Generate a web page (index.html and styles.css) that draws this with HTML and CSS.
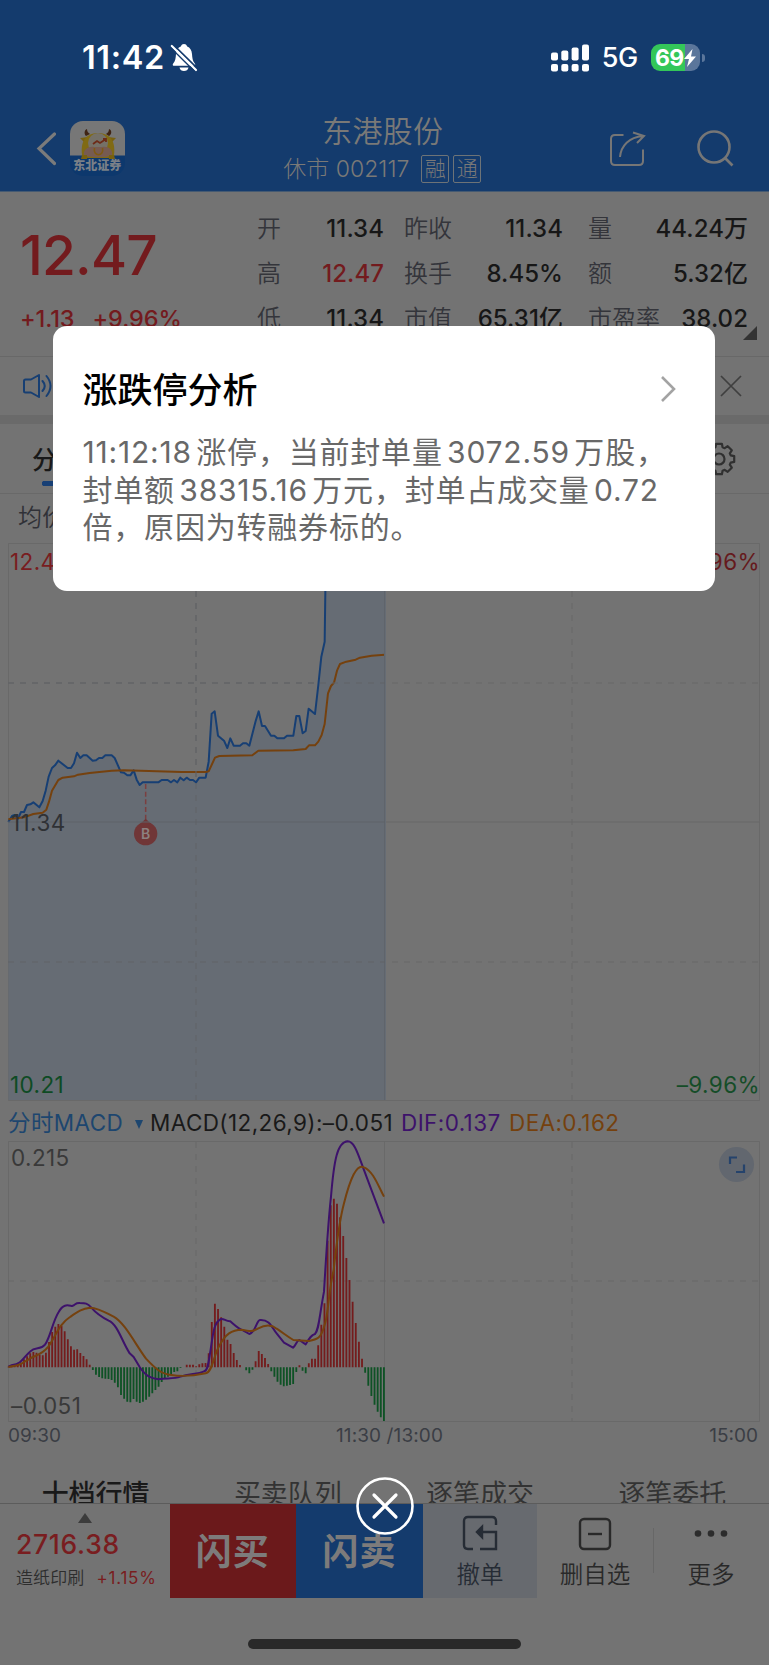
FILE: index.html
```html
<!DOCTYPE html>
<html lang="zh-CN">
<head>
<meta charset="utf-8">
<title>东港股份</title>
<link rel="stylesheet" href="styles.css">
</head>
<body>
<div class="screen">
  <header class="header">
    <div class="status">
      <div class="status-left">
        <span class="clock">11:42</span>
        <svg class="bell" width="28" height="30" viewBox="0 0 28 30">
          <path d="M3.500 22.800h20.500c1.200-.1 1.600-1.200.8-2.200C22.500 18 22.300 15 22 11c-.3-4-2-6.500-4.800-7.500C16.700 1.800 15.400 1 14 1s-2.700.8-3.200 2.500C8 4.500 6.300 7 6 11c-.3 4-.5 7-2.800 9.600-.8 1-.5 2.200.3 2.200zM9.500 24.500h9c-.4 2.400-2.200 3.600-4.500 3.600s-4.100-1.200-4.500-3.600z" fill="#fff"/>
          <path d="M3.200 1.600 27.400 25.300" stroke="#143b6d" stroke-width="1.700"/>
          <path d="M1.800 3 26 27" stroke="#fff" stroke-width="2.200" stroke-linecap="round"/>
          <path d="M.4 4.500 24.400 28.300" stroke="#143b6d" stroke-width="1.400"/>
        </svg>
      </div>
      <div class="status-right">
        <svg width="40" height="28" viewBox="0 0 40 28" fill="#fff">
          <rect x="1" y="8.500" width="7" height="8" rx="2"/><rect x="11.300" y="6.500" width="7" height="10" rx="2"/><rect x="21.600" y="3.500" width="7" height="13" rx="2"/><rect x="32" y=".5" width="7" height="16" rx="2"/>
          <rect x="1" y="20" width="7" height="7.500" rx="2"/><rect x="11.300" y="20" width="7" height="7.500" rx="2"/><rect x="21.600" y="20" width="7" height="7.500" rx="2"/><rect x="32" y="20" width="7" height="7.500" rx="2"/>
        </svg>
        <span class="net">5G</span>
        <div class="battery">
          <span>69</span>
          <svg width="12" height="18" viewBox="0 0 12 18"><path d="M8.500 0 0 10h5L3 18l9-10.500H7z" fill="#fff"/></svg>
        </div>
        <i class="nub"></i>
      </div>
    </div>
    <div class="nav">
      <svg class="back" width="20" height="34" viewBox="0 0 20 34"><path d="M18.500 2 3 16.500 18.500 31.500" fill="none" stroke="#7b7b7b" stroke-width="3.200" stroke-linecap="round"/></svg>
      <div class="logo">
        <svg width="55" height="40" viewBox="0 0 55 40">
          <path d="M17 8c-3 1-3 5-1 7l4-2c-2-1-3-3-3-5zM39 8c3 1 3 5 0 7l-3-2c2-1 3-3 3-5z" fill="#3f2413"/>
          <path d="M10 17l8-1-3 6zM46 17l-8-1 3 6z" fill="#776012"/>
          <path d="M12 34C10 18 18 12 28 12s18 6 16 22q-2 3-6 3H18q-4 0-6-3z" fill="#806a13"/>
          <circle cx="28" cy="22" r="10" fill="#757168"/>
          <path d="M14 34c-1-6 5-9 10-8h8c6-1 11 2 10 8-3 3-25 3-28 0z" fill="#775b51"/>
          <path d="M12 34h5v4h-6zM39 34h5l1 4h-6z" fill="#786010"/>
          <path d="M23 23l4-3 3 2 6-4M33 18h3v3" fill="none" stroke="#6d2b18" stroke-width="1.800"/>
          <path d="M24.500 27c-2 9 10 9 8 0" fill="none" stroke="#805a13" stroke-width="1.600"/>
        </svg>
        <b>东北证券</b>
      </div>
      <div class="titles">
        <div class="name">东港股份</div>
        <div class="code"><span>休市 002117</span><i>融</i><i>通</i></div>
      </div>
      <svg class="share" width="38" height="38" viewBox="0 0 38 38" fill="none" stroke="#767676" stroke-width="2">
        <path d="M14.500 4H6Q2 4 2 8v22q0 4 4 4h24q4 0 4-4V18.500"/><path d="M11 26C12 15 20 6 34 5M24 1.500 35 5l-7 7"/>
      </svg>
      <svg class="search" width="38" height="38" viewBox="0 0 38 38" fill="none" stroke="#767676" stroke-width="2.600"><circle cx="18" cy="17" r="15.500"/><path d="m28.500 27.500 8 8"/></svg>
    </div>
  </header>

  <section class="quote">
    <div class="last">
      <div class="price">12.47</div>
      <div class="change"><span>+1.13</span><span>+9.96%</span></div>
    </div>
    <div class="stats c1"><div><span>开</span><b>11.34</b></div><div><span>高</span><b class="up">12.47</b></div><div><span>低</span><b>11.34</b></div></div>
    <div class="stats c2"><div><span>昨收</span><b>11.34</b></div><div><span>换手</span><b>8.45%</b></div><div><span>市值</span><b>65.31亿</b></div></div>
    <div class="stats c3"><div><span>量</span><b>44.24万</b></div><div><span>额</span><b>5.32亿</b></div><div><span>市盈率</span><b>38.02</b></div></div>
    <svg class="corner" width="14" height="14" viewBox="0 0 14 14"><path d="M14 0v14H0z" fill="#333"/></svg>
  </section>

  <section class="notice">
    <svg width="30" height="26" viewBox="0 0 30 26" fill="none" stroke="#173f73" stroke-width="2" stroke-linejoin="round" stroke-linecap="round">
      <path d="M1 8v10q0 1.500 1.500 1.500H8l8 4.500V2L8 6.500H2.500Q1 6.500 1 8zM19.500 8q4.500 5 0 10M23.500 3q8 10 0 20"/>
    </svg>
    <svg width="22" height="22" viewBox="0 0 22 22" stroke="#3f3f3f" stroke-width="1.700"><path d="m1 1 20 20M21 1 1 21"/></svg>
  </section>

  <section class="tabs">
    <div class="tab">分时</div>
    <svg width="34" height="34" viewBox="-17 -17 34 34" fill="none" stroke="#303030" stroke-width="2.200" stroke-linejoin="round">
      <path id="gear" d=""/><circle r="5.500"/>
    </svg>
  </section>
  <div class="average">均价</div>

  <svg class="chart" width="769" height="564" viewBox="0 0 769 564">
    <g fill="none" stroke="#696969"><path d="M8.500 3.500h751v557h-751zM8.500 282h751"/><path d="M196 3v557M572 3v557M8 143h751M8 422h751" stroke-dasharray="6 6"/></g>
    <g transform="translate(0 40) scale(.33333)">
      <path class="area" d="M25 726 L36 708 44 705 54 716 63 696 72 696 81 675 91 673 100 667 118 682 128 663 137 632 146 590 156 564 165 556 175 542 203 564 213 564 222 550 231 518 241 534 250 526 260 526 278 542 288 541 297 534 307 534 316 526 335 526 344 534 363 577 372 578 382 586 391 586 401 571 410 599 419 615 428 607 475 607 485 600 503 600 513 607 522 600 532 607 541 593 551 601 560 593 570 600 579 600 588 607 598 593 617 593 626 545 635 401 644 394 654 467 672 482 682 504 691 475 701 497 720 497 729 490 739 490 748 497 767 423 776 394 786 438 795 438 813 467 823 467 832 475 852 475 861 467 880 467 889 408 898 408 908 460 917 453 926 386 945 402 955 315 964 230 974 185 978 -109H1158V1560H25Z"/>
      <path class="blue" d="M25 726 L36 708 44 705 54 716 63 696 72 696 81 675 91 673 100 667 118 682 128 663 137 632 146 590 156 564 165 556 175 542 203 564 213 564 222 550 231 518 241 534 250 526 260 526 278 542 288 541 297 534 307 534 316 526 335 526 344 534 363 577 372 578 382 586 391 586 401 571 410 599 419 615 428 607 475 607 485 600 503 600 513 607 522 600 532 607 541 593 551 601 560 593 570 600 579 600 588 607 598 593 617 593 626 545 635 401 644 394 654 467 672 482 682 504 691 475 701 497 720 497 729 490 739 490 748 497 767 423 776 394 786 438 795 438 813 467 823 467 832 475 852 475 861 467 880 467 889 408 898 408 908 460 917 453 926 386 945 402 955 315 964 230 974 185 978 -109"/>
      <path class="orange" d="M25 718 72 712 100 702 128 698 139 689 147 665 156 632 175 600 188 593 222 589 234 584 269 579 335 572 372 571 545 576H617L626 574 645 533 658 528 757 526 775 512 880 511 917 507 927 496H945L955 485 965 465 974 432 984 340 993 318 1002 308 1011 272 1020 252 1039 245 1067 239 1080 233 1115 227 1154 224"/>
      <path d="M437 612V724" stroke="#7b3f40" stroke-width="4.500" stroke-dasharray="15 8"/>
      <path d="M437 716 460 738H414z" fill="#703637"/><circle cx="437" cy="761" r="35" fill="#703637"/>
    </g>
    <path d="M384.500 3v557" stroke="#5f646b"/><path d="M196 3v557M8 143h377M8 422h377" stroke="#616367" stroke-dasharray="6 6"/><path d="M8 282h377" stroke="#5f6268"/>
    <text x="145.700" y="299" class="badge">B</text>
    <text x="10" y="29.500" class="lab" fill="#791d20">12.47</text>
    <text x="760" y="29.500" class="lab end" fill="#651a1d">9.96%</text>
    <text x="11" y="291" class="lab" fill="#2f3135">11.34</text>
    <text x="10" y="553" class="lab" fill="#0e4b24">10.21</text>
    <text x="760" y="553" class="lab end" fill="#154d28">–9.96%</text>
  </svg>

  <div class="legend"><span class="sel">分时MACD</span><i></i><span class="l1">MACD(12,26,9):–0.051</span><span class="l2">DIF:0.137</span><span class="l3">DEA:0.162</span></div>

  <svg class="chart" width="769" height="288" viewBox="0 0 769 288">
    <g fill="none" stroke="#696969"><path d="M8.500 3.500h751v280h-751zM384.500 3.500v280"/><path d="M196 4v279M572 4v279M8 143h751" stroke-dasharray="6 6"/></g>
    <g transform="translate(0 -68) scale(.33333)">
      <path id="up" stroke="#741c1d" stroke-width="5.500"/>
      <path id="down" stroke="#0e5225" stroke-width="5.500"/>
      <path class="purple" d="M25 890 37 885C64 884 73 859 90 845 107 828 120 842 135 824 151 802 158 754 176 726 190 700 204 706 216 708 229 703 225 698 240 699 256 699 262 699 274 713 293 735 310 744 326 752 353 763 366 815 389 850L401 861 419 891C438 920 454 925 475 928 499 923 519 928 541 920 570 910 593 914 612 904 624 904 626 874 632 838 641 775 644 757 663 747 672 745 678 755 691 754 705 766 713 775 729 781L748 792C768 787 769 751 780 750 810 748 815 772 831 792L852 818 879 833C889 825 889 812 898 810L917 823C928 805 933 795 945 792 957 779 957 745 972 665 976 600 983 470 993 380 1002 270 1012 216 1043 214 1062 214 1072 246 1089 292L1152 460"/>
      <path class="orange2" d="M25 891C70 884 65 879 91 865 109 855 126 854 145 830 167 799 177 762 210 741 230 727 246 715 270 713 300 715 320 730 341 740 374 758 405 821 438 866 466 896 484 912 514 915 545 920 583 917 617 910 637 907 642 855 655 833 676 791 696 779 725 779 753 785 757 785 775 775 800 762 816 765 830 776 851 790 863 800 880 810L926 813C950 808 962 808 973 768 986 733 984 670 1001 600 1009 527 1016 460 1032 400 1051 325 1070 281 1092 292 1118 303 1132 341 1152 380"/>
    </g>
    <circle cx="736.500" cy="26.500" r="17.500" fill="#62676f"/>
    <path d="M730 26v-6.500h7M744 26.500V34h-8" fill="none" stroke="#25436c" stroke-width="2.200"/>
    <text x="11" y="28" class="lab" fill="#393939">0.215</text>
    <text x="11" y="275.500" class="lab" fill="#393939">–0.051</text>
  </svg>
  <div class="axis"><span>09:30</span><span class="mid">11:30 /13:00</span><span>15:00</span></div>

  <div class="depth"><span class="on">十档行情</span><span>买卖队列</span><span>逐笔成交</span><span>逐笔委托</span></div>

  <footer class="bar">
    <div class="index"><i></i><b>2716.38</b><div><span>造纸印刷</span><em>+1.15%</em></div></div>
    <div class="trade buy">闪买</div>
    <div class="trade sell">闪卖</div>
    <div class="act cancel">
      <svg width="36" height="36" viewBox="0 0 36 36" fill="none" stroke="#262c35" stroke-width="2.400"><path d="M34 10V6q0-4-4-4H6Q2 2 2 6v24q0 4 4 4h5M18 34h16V17H20"/><path d="M20 12v10l-5-5z" fill="#262c35"/></svg>
      <span>撤单</span>
    </div>
    <div class="act"><svg width="36" height="36" viewBox="0 0 36 36" fill="none" stroke="#292929" stroke-width="2.400"><rect x="3" y="4" width="30" height="30" rx="4"/><path d="M11 19h14"/></svg><span>删自选</span></div>
    <div class="act more"><svg width="36" height="36" viewBox="0 0 36 36" fill="#2c2c2c"><circle cx="5" cy="18.500" r="3.300"/><circle cx="18" cy="18.500" r="3.300"/><circle cx="31" cy="18.500" r="3.300"/></svg><span>更多</span></div>
  </footer>
  <div class="home"><i></i></div>

  <div class="dialog">
    <div class="dialog-head"><h2>涨跌停分析</h2><svg width="17" height="28" viewBox="0 0 17 28"><path d="m2 2 12 12L2 26" fill="none" stroke="#a3a3a3" stroke-width="2.600"/></svg></div>
    <p>11:12:18 涨停，当前封单量 3072.59 万股，<br>封单额 38315.16 万元，封单占成交量 0.72<br>倍，原因为转融券标的。</p>
  </div>
  <svg class="close" width="60" height="60" viewBox="0 0 60 60" fill="none" stroke="#fff"><circle cx="30" cy="30" r="27.500" stroke-width="2.600"/><path d="M19 19l22 22M41 19 19 41" stroke-width="3.200" stroke-linecap="round"/></svg>
</div>
<script src="chart.js"></script>
</body>
</html>
```
FILE: chart.js
```js
// MACD histogram, one value per minute from 09:30 to 11:30
const bars = [2,4,8,10,14,24,33,42,46,44,38,36,44,76,106,122,130,124,108,84,63,53,54,43,34,24,8,-8,-22,-29,-33,-34,-35,-38,-46,-60,-83,-94,-103,-105,-95,-103,-107,-103,-97,-88,-78,-68,-58,-44,-34,-28,-20,-14,-12,-2,0,8,8,8,3,9,12,13,42,136,191,175,150,122,83,70,43,22,7,0,-9,-18,-7,18,49,40,28,10,-12,-28,-43,-52,-57,-55,-53,-50,-14,6,-10,-18,12,26,26,66,128,192,380,486,506,491,450,394,328,262,197,133,77,26,-16,-55,-86,-112,-133,-150,-161];
const draw = (id, keep) => document.getElementById(id).setAttribute('d',
  bars.map((v, i) => keep(v) ? `M${(25 + 9.39 * i).toFixed(1)} 892v${-v}` : '').join(''));
draw('up', v => v > 0);
draw('down', v => v < 0);

// gear outline: eight teeth
let d = '';
for (let i = 0; i < 8; i++) {
  [[-0.3, 12.2], [-0.19, 15.5], [0.19, 15.5], [0.3, 12.2]].forEach(([off, r]) => {
    const a = i * Math.PI / 4 + off;
    d += (d ? 'L' : 'M') + (r * Math.cos(a)).toFixed(1) + ' ' + (r * Math.sin(a)).toFixed(1);
  });
}
document.getElementById('gear').setAttribute('d', d + 'Z');
```
FILE: styles.css
```css
* { box-sizing: border-box; }
body { margin: 0; background: #737373; font-family: Inter, "Noto Sans CJK SC", sans-serif; color: #191919; }
i, em { font-style: normal; }
svg { display: block; flex: none; }
.screen { position: relative; width: 769px; height: 1665px; overflow: hidden; white-space: nowrap; }
.header { height: 192px; background: #143b6d; border-bottom: 1px solid #455a72; }
.status { height: 100px; padding: 15px 64px 0 82px; display: flex; justify-content: space-between; align-items: center; color: #fff; }
.status-left, .status-right { display: flex; align-items: center; }
.clock { font-size: 32.500px; font-weight: 600; letter-spacing: .6px; }
.bell { margin-left: 5px; }
.net { font-size: 27px; margin: 0 13px 0 12px; letter-spacing: -.3px; font-weight: 450; }
.battery { width: 49px; height: 27px; border-radius: 9px; background: linear-gradient(90deg, #34c759 0 34px, #5b769b 34px); display: flex; align-items: center; padding-left: 4px; font-size: 23px; font-weight: 700; letter-spacing: -.6px; }
.nub { width: 3px; height: 8px; border-radius: 0 3px 3px 0; background: #5b769b; margin-left: 2px; }
.nav { height: 91px; padding: 0 35px 0 36px; display: flex; align-items: flex-start; }
.back { margin-top: 32px; }
.logo { width: 55px; height: 55px; margin: 21px 0 0 14px; border-radius: 13px; overflow: hidden; background: linear-gradient(#777 0 34px, #0d386d 35px); }
.logo svg { margin-bottom: -3px; }
.logo b { display: block; font-size: 12px; line-height: 15px; text-align: center; color: #7a8087; font-weight: 900; }
.titles { width: 260px; margin: 12px 0 0 129px; text-align: center; color: #7a7977; }
.name { font-size: 30px; line-height: 38px; font-weight: 350; letter-spacing: .3px; }
.code { margin-top: 5px; display: flex; align-items: center; justify-content: center; font-size: 23px; line-height: 28px; font-weight: 300; }
.code span { margin-right: 12px; letter-spacing: 0; }
.code i { width: 28px; height: 28px; line-height: 25px; border: 1px solid #6d7377; border-radius: 2px; margin-right: 4px; font-size: 21px; }
.code i:last-child { margin-right: 1px; }
.share { margin: 31px 0 0 97px; }
.search { margin: 30px 0 0 49px; }
.quote { position: relative; height: 165px; padding: 14px 21px 0 20px; display: flex; border-bottom: 1px solid #686868; }
.last { width: 237px; color: #731b1e; }
.price { font-size: 55px; line-height: 66px; margin-top: 16px; font-weight: 500; letter-spacing: -.8px; }
.change { display: flex; gap: 18px; font-size: 23.500px; line-height: 28px; margin-top: 17px; font-weight: 450; letter-spacing: -.1px; }
.stats { line-height: 45px; font-size: 24px; }
.stats div { display: flex; justify-content: space-between; height: 45px; }
.stats span { color: #34353b; font-weight: 350; }
.stats b { font-weight: 500; color: #171717; letter-spacing: .05px; }
.stats .up { color: #731b1e; }
.c1 { width: 127px; } .c2 { width: 159px; margin-left: 20px; } .c3 { width: 160px; margin-left: 25px; }
.corner { position: absolute; left: 743px; top: 134px; }
.notice { height: 67px; padding: 0 27px 0 23px; border-bottom: 9px solid #6a6a6a; display: flex; justify-content: space-between; align-items: center; }
.tabs { height: 70px; padding: 0 33px 0 32px; border-bottom: 1px solid #696969; display: flex; justify-content: space-between; align-items: center; }
.tab { width: 48px; height: 62px; padding-top: 13px; line-height: 39px; font-size: 25px; font-weight: 500; background: radial-gradient(circle at 2.500px 2.500px, #173f75 2.500px, transparent 3px) 9.500px 53px / 5px 5px no-repeat, linear-gradient(#173f75, #173f75) 12px 53px / 26px 5px no-repeat; }
.average { height: 46px; padding-left: 18px; font-size: 24px; line-height: 47px; font-weight: 350; color: #303137; }
.lab { font-size: 22.500px; letter-spacing: .4px; }
.end { text-anchor: end; }
.badge { font-size: 14px; font-weight: 600; fill: #8c8080; text-anchor: middle; }
.area { fill: #666c74; }
.blue, .orange, .purple, .orange2 { fill: none; stroke-width: 6; stroke-linejoin: round; }
.blue { stroke: #173f74; }
.orange, .orange2 { stroke: #75410e; }
.purple { stroke: #3d126b; }
.legend { height: 34px; padding: 4px 0 0 8px; display: flex; align-items: center; line-height: 30px; font-size: 22.500px; letter-spacing: .4px; }
.sel { color: #1d466f; width: 118px; }
.legend i { border: 4.500px solid transparent; border-top: 9px solid #1d466f; border-bottom: 0; margin: 3px 7px 0 9px; }
.l1 { width: 251px; } .l2 { width: 108px; color: #3d126b; } .l3 { color: #75410e; }
.axis { height: 24px; padding: 0 11px 0 8px; display: grid; grid-template-columns: 1fr auto 1fr; font-size: 19px; line-height: 20px; color: #3b3e45; }
.axis span:last-child { text-align: right; }
.mid { padding-left: 13px; letter-spacing: .1px; }
.depth { height: 54px; padding-top: 23px; display: grid; grid-template-columns: repeat(4, 1fr); text-align: center; font-size: 27px; line-height: 44px; overflow: hidden; color: #333; border-bottom: 1px solid #5c5c5c; font-weight: 400; }
.depth .on { color: #191919; font-weight: 500; }
.depth span { margin-right: 1px; }
.bar { height: 94px; display: grid; grid-template: 94px / 169.500px 126.500px 127px 114px 116px 116px; }
.index { padding: 9px 0 0 16px; color: #791d20; }
.index i { display: block; width: 14px; border: 7px solid transparent; border-bottom: 10px solid #3c3c3c; border-top: 0; margin-left: 62px; }
.index b { display: block; font-size: 26.500px; line-height: 32px; font-weight: 450; margin-top: 5px; letter-spacing: .7px; }
.index div { display: flex; gap: 12px; font-size: 17px; line-height: 24px; margin-top: 6px; }
.index span { color: #2d2d2d; font-weight: 350; letter-spacing: .1px; }
.index em { letter-spacing: .8px; }
.trade { height: 94px; color: #7d7b7b; font-size: 36px; font-weight: 700; text-align: center; line-height: 97px; letter-spacing: 1px; }
.buy { background: #6b191b; } .sell { background: #143b6d; }
.act { display: flex; flex-direction: column; align-items: center; padding-top: 11px; font-size: 23.500px; line-height: 36px; font-weight: 350; color: #292929; }
.act span { margin-top: 6px; }
.cancel { background: #676a6f; color: #262c35; }
.more { background: linear-gradient(#676767, #676767) 0 24px / 1px 45px no-repeat; }
.home { height: 67px; padding-top: 41px; }
.home i { display: block; width: 273px; height: 10px; margin: 0 auto; border-radius: 5px; background: #292929; }
.dialog { position: absolute; left: 53px; top: 326px; width: 662px; height: 265px; padding: 39px 38px 0 29.500px; border-radius: 14px; background: #fff; }
.dialog-head { display: flex; justify-content: space-between; align-items: center; height: 48px; }
.dialog h2 { margin: -3px 0 0; font-size: 35px; font-weight: 500; color: #000; }
.dialog p { margin: 21px 0 0; font-size: 30px; line-height: 37.500px; color: #686868; letter-spacing: .8px; word-spacing: -4.800px; }
.close { position: absolute; left: 354.500px; top: 1476px; }
```
